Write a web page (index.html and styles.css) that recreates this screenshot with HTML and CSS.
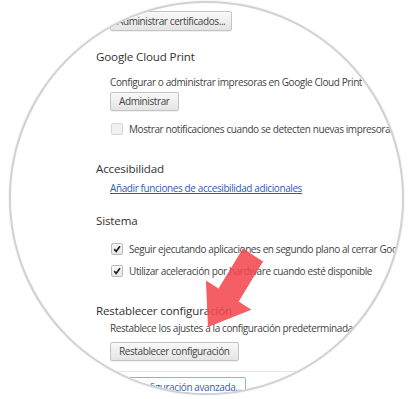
FILE: index.html
```html
<!DOCTYPE html>
<html lang="es">
<head>
<meta charset="utf-8">
<title>Configuración</title>
<link rel="stylesheet" href="styles.css">
</head>
<body>
<div class="stage">
  <div class="lens">
    <div class="page">
      <button class="btn btn-cert">Administrar certificados...</button>

      <h3 class="heading h-gcp">Google Cloud Print</h3>
      <div class="sub">
        <p class="text t-gcp">Configurar o administrar impresoras en Google Cloud Print</p>
        <button class="btn btn-admin">Administrar</button>
        <label class="check c-notif"><span class="box off"></span><span>Mostrar notificaciones cuando se detecten nuevas impresoras</span></label>
      </div>

      <h3 class="heading h-acc">Accesibilidad</h3>
      <div class="sub">
        <a class="link" href="#">Añadir funciones de accesibilidad adicionales</a>
      </div>

      <h3 class="heading h-sys">Sistema</h3>
      <div class="sub">
        <label class="check c-bg"><span class="box on"><svg viewBox="0 0 12 12"><path d="M2.6 6.2 L5 8.8 L9.6 2.6" fill="none" stroke="#222" stroke-width="2"/></svg></span><span>Seguir ejecutando aplicaciones en segundo plano al cerrar Google Chrome</span></label>
        <label class="check c-hw"><span class="box on"><svg viewBox="0 0 12 12"><path d="M2.6 6.2 L5 8.8 L9.6 2.6" fill="none" stroke="#222" stroke-width="2"/></svg></span><span>Utilizar aceleración por hardware cuando esté disponible</span></label>
      </div>

      <h3 class="heading h-reset">Restablecer configuración</h3>
      <div class="sub">
        <p class="text t-reset">Restablece los ajustes a la configuración predeterminada</p>
        <button class="btn btn-reset">Restablecer configuración</button>
      </div>

      <hr class="sep">
      <button class="adv">Ocultar configuración avanzada...</button>
    </div>
  </div>
  <svg class="arrow" viewBox="0 0 410 399" width="410" height="399">
    <polygon points="242.9,248.5 263.1,261.5 238.7,301.6 251.3,309.8 208,327 205.9,280.4 218.5,288.6" fill="#f2484f" fill-opacity="0.88"/>
  </svg>
</div>
</body>
</html>
```

FILE: styles.css
```css
* { box-sizing: border-box; }
html, body { margin: 0; padding: 0; background: #fff; }
.stage {
  position: relative;
  width: 410px;
  height: 399px;
  overflow: hidden;
  background: #fff;
  font-family: "Open Sans", "Noto Sans", sans-serif;
}
.lens {
  margin: 0 0 0 9px;
  width: 395px;
  height: 394px;
  border-radius: 50%;
  border: 2px solid #d2d2d2;
  box-shadow: 0 0 2px rgba(0,0,0,0.12);
  overflow: hidden;
  background: #fff;
  position: relative;
  top: 1px;
}
.page {
  display: flex;
  flex-direction: column;
  align-items: flex-start;
  padding: 8px 0 0 85px;
  color: #444;
  font-size: 10px;
  letter-spacing: -0.4px;
  white-space: nowrap;
}
.sub {
  display: flex;
  flex-direction: column;
  align-items: flex-start;
  padding-left: 14px;
}
.heading {
  margin: 0;
  font-size: 11.6px;
  letter-spacing: -0.15px;
  font-weight: 400;
  line-height: 18px;
  color: #333;
}
.text { margin: 0; line-height: 16px; }
.btn {
  font-family: inherit;
  font-size: 10px;
  letter-spacing: -0.4px;
  color: #444;
  height: 19px;
  padding: 0 8px;
  border: 1px solid #c3c3c3;
  border-radius: 2px;
  background: linear-gradient(#f9f9f9, #e4e4e4);
  box-shadow: 0 1px 0 rgba(0,0,0,0.06);
  line-height: 17px;
  margin-left: 14px;
}
.sub .btn { margin-left: 0; }
.btn-cert { height: 20px; padding: 0 6px; }
.h-gcp { margin-top: 17px; }
.t-gcp { margin-top: 8px; }
.btn-admin { margin-top: 2px; }
.check {
  display: flex;
  align-items: center;
  gap: 6px;
  line-height: 16px;
  padding-left: 1px;
}
.box {
  width: 12px;
  height: 12px;
  border: 1px solid #b9b9b9;
  border-radius: 2px;
  background: linear-gradient(#fafafa, #e6e6e6);
  display: flex;
}
.box.off { border-color: #d6d6d6; background: #f1f1f1; }
.box svg { width: 10px; height: 10px; }
.c-notif { margin-top: 10px; }
.h-acc { margin-top: 23px; }
.link {
  margin-top: 2px;
  line-height: 16px;
  color: #2f5cb7;
  text-decoration: underline;
}
.h-sys { margin-top: 16px; }
.c-bg { margin-top: 11px; }
.c-hw { margin-top: 6px; }
.h-reset { margin-top: 23px; }
.t-reset { margin-top: 0; }
.btn-reset { margin-top: 6px; }
.sep {
  align-self: stretch;
  margin: 10px 0 0 0;
  border: 0;
  border-top: 1px solid #e6e6e6;
  height: 0;
}
.adv {
  margin-top: 5px;
  margin-left: 0;
  font-family: inherit;
  font-size: 10px;
  letter-spacing: -0.4px;
  color: #3b5ea6;
  background: #fff;
  border: 1px solid #8fb0e6;
  border-radius: 2px;
  height: 20px;
  padding: 0 3px;
  line-height: 18px;
}
.arrow {
  position: absolute;
  left: 0;
  top: 0;
  pointer-events: none;
}
```
